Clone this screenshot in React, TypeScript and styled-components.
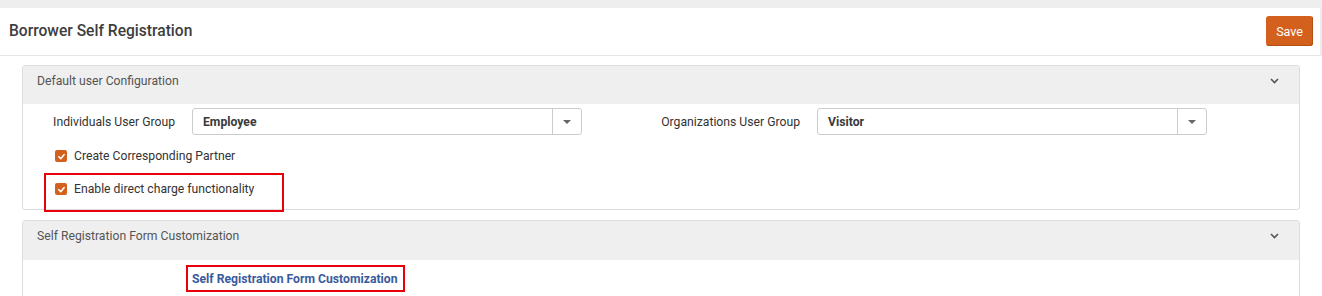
import React from "react";
import styled, { createGlobalStyle } from "styled-components";

const Global = createGlobalStyle`
  html, body { margin: 0; padding: 0; background: #ffffff; }
  body { font-family: Roboto, "Liberation Sans", Arial, sans-serif; color: #333; }
  *, *::before, *::after { box-sizing: border-box; }
`;

const Page = styled.div`
  width: 1322px;
  height: 296px;
  overflow: hidden;
  background: #ffffff;
  border-top: 8px solid #eeeeee;
  display: flex;
  flex-direction: column;
`;

const Header = styled.header`
  height: 48px;
  flex: 0 0 auto;
  display: flex;
  align-items: center;
  justify-content: space-between;
  padding: 0 7px 1px 9px;
  border-bottom: 1px solid #e6e6e6;
  border-right: 2px solid #ececec;
`;

const Title = styled.h1`
  margin: 0;
  font-size: 15.6px;
  font-weight: 500;
  color: #3d3d3d;
`;

const SaveButton = styled.button`
  width: 47px;
  height: 30px;
  border: none;
  border-radius: 3px;
  background: #d4601e;
  box-shadow: inset -1px -1px 0 #b24e14;
  color: #ffffff;
  font-family: Roboto, "Liberation Sans", Arial, sans-serif;
  font-size: 12.5px;
  padding: 0;
`;

const Content = styled.main`
  padding: 9px 22px 0 22px;
  display: flex;
  flex-direction: column;
  gap: 10px;
`;

const Panel = styled.section`
  border: 1px solid #dddddd;
  border-radius: 3px;
  background: #ffffff;
`;

const PanelHeader = styled.div<{ $h: number }>`
  height: ${(p) => p.$h}px;
  background: #efefef;
  display: flex;
  align-items: flex-start;
  justify-content: space-between;
  padding: 7px 20px 0 14px;
  border-radius: 3px 3px 0 0;
`;

const PanelTitle = styled.span`
  font-size: 12.2px;
  line-height: 16px;
  color: #555555;
`;

const Chevron = styled.svg`
  margin-top: 5px;
`;

const PanelBody = styled.div<{ $pad: string }>`
  padding: ${(p) => p.$pad};
  display: flex;
  flex-direction: column;
  align-items: flex-start;
`;

const FieldRow = styled.div`
  display: flex;
  padding-left: 7px;
`;

const Field = styled.div`
  width: 625px;
  display: flex;
  align-items: center;
`;

const FieldLabel = styled.label`
  width: 145px;
  text-align: right;
  font-size: 12.2px;
  color: #333333;
  margin-right: 17px;
`;

const Select = styled.div`
  width: 390px;
  height: 27px;
  border: 1px solid #cccccc;
  border-radius: 3px;
  display: flex;
  align-items: stretch;
  background: #fff;
`;

const SelectValue = styled.span`
  flex: 1;
  display: flex;
  align-items: center;
  padding-left: 10px;
  font-size: 12.2px;
  font-weight: 700;
  color: #3a3a3a;
`;

const SelectToggle = styled.span`
  width: 29px;
  border-left: 1px solid #cccccc;
  display: flex;
  align-items: center;
  justify-content: center;
`;

const Caret = styled.span`
  width: 0;
  height: 0;
  border-left: 4px solid transparent;
  border-right: 4px solid transparent;
  border-top: 4px solid #666666;
`;

const CheckList = styled.div`
  display: flex;
  flex-direction: column;
  gap: 15px;
  padding: 12px 0 0 32px;
`;

const CheckRow = styled.div<{ $marked?: boolean }>`
  position: relative;
  display: flex;
  align-items: center;
  gap: 7px;
  height: 18px;
  font-size: 12.2px;
  color: #333333;
  ${(p) =>
    p.$marked
      ? `
    &::after {
      content: "";
      position: absolute;
      left: -11px;
      top: -7px;
      width: 240px;
      height: 39px;
      border: 2px solid #e8000b;
      pointer-events: none;
    }
  `
      : ""}
`;

const Box = styled.span`
  width: 12px;
  height: 12px;
  border-radius: 2px;
  background: #d4601e;
  display: inline-flex;
  align-items: center;
  justify-content: center;
`;

const LinkWrap = styled.div`
  position: relative;
  margin-left: 169px;
  height: 15px;
  display: flex;
  align-items: center;
  &::after {
    content: "";
    position: absolute;
    left: -6px;
    top: -6px;
    width: 219px;
    height: 27px;
    border: 2px solid #e8000b;
    pointer-events: none;
  }
`;

const Link = styled.a`
  font-size: 12.2px;
  font-weight: 700;
  color: #3a5b9b;
  text-decoration: none;
`;

const Check = () => (
  <Box>
    <svg width="9" height="9" viewBox="0 0 10 10">
      <polyline points="2,5.2 4.2,7.4 8,2.8" fill="none" stroke="#fff" strokeWidth="1.7" strokeLinecap="round" strokeLinejoin="round" />
    </svg>
  </Box>
);

const Down = () => (
  <Chevron width="9" height="6" viewBox="0 0 9 6">
    <polyline points="1,1 4.5,4.5 8,1" fill="none" stroke="#555" strokeWidth="1.6" />
  </Chevron>
);

export default function App() {
  return (
    <>
      <Global />
      <Page>
        <Header>
          <Title>Borrower Self Registration</Title>
          <SaveButton>Save</SaveButton>
        </Header>
        <Content>
          <Panel>
            <PanelHeader $h={38}>
              <PanelTitle>Default user Configuration</PanelTitle>
              <Down />
            </PanelHeader>
            <PanelBody $pad="4px 0 11px 0">
              <FieldRow>
                <Field>
                  <FieldLabel>Individuals User Group</FieldLabel>
                  <Select>
                    <SelectValue>Employee</SelectValue>
                    <SelectToggle><Caret /></SelectToggle>
                  </Select>
                </Field>
                <Field>
                  <FieldLabel>Organizations User Group</FieldLabel>
                  <Select>
                    <SelectValue>Visitor</SelectValue>
                    <SelectToggle><Caret /></SelectToggle>
                  </Select>
                </Field>
              </FieldRow>
              <CheckList>
                <CheckRow>
                  <Check />
                  <span>Create Corresponding Partner</span>
                </CheckRow>
                <CheckRow $marked>
                  <Check />
                  <span>Enable direct charge functionality</span>
                </CheckRow>
              </CheckList>
            </PanelBody>
          </Panel>
          <Panel>
            <PanelHeader $h={39}>
              <PanelTitle>Self Registration Form Customization</PanelTitle>
              <Down />
            </PanelHeader>
            <PanelBody $pad="11px 0 20px 0">
              <LinkWrap>
                <Link href="#">Self Registration Form Customization</Link>
              </LinkWrap>
            </PanelBody>
          </Panel>
        </Content>
      </Page>
    </>
  );
}
